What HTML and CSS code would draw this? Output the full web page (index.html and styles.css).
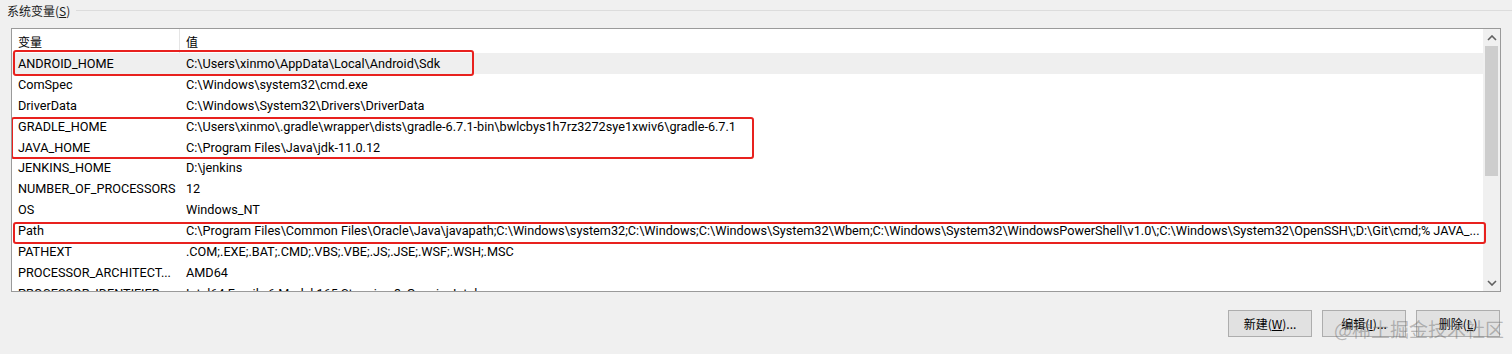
FILE: index.html
```html
<!DOCTYPE html>
<html lang="zh-CN">

<head>
    <meta charset="UTF-8">
    <meta name="viewport" content="width=device-width, initial-scale=1.0">
    <title>系统变量</title>

    <link rel="stylesheet" href="styles.css">

</head>

<body>
    <div class="group">
        <div class="group-title"><span>系统变量(<u>S</u>)</span></div>

        <div class="listview">
            <div class="table">
                <div class="row head">
                    <div class="cell name">变量</div>
                    <div class="cell value">值</div>
                </div>
                <div class="row hover">
                    <div class="cell name">ANDROID_HOME</div>
                    <div class="cell value">C:\Users\xinmo\AppData\Local\Android\Sdk</div>
                </div>
                <div class="row">
                    <div class="cell name">ComSpec</div>
                    <div class="cell value">C:\Windows\system32\cmd.exe</div>
                </div>
                <div class="row">
                    <div class="cell name">DriverData</div>
                    <div class="cell value">C:\Windows\System32\Drivers\DriverData</div>
                </div>
                <div class="row">
                    <div class="cell name">GRADLE_HOME</div>
                    <div class="cell value">C:\Users\xinmo\.gradle\wrapper\dists\gradle-6.7.1-bin\bwlcbys1h7rz3272sye1xwiv6\gradle-6.7.1</div>
                </div>
                <div class="row">
                    <div class="cell name">JAVA_HOME</div>
                    <div class="cell value">C:\Program Files\Java\jdk-11.0.12</div>
                </div>
                <div class="row">
                    <div class="cell name">JENKINS_HOME</div>
                    <div class="cell value">D:\jenkins</div>
                </div>
                <div class="row">
                    <div class="cell name">NUMBER_OF_PROCESSORS</div>
                    <div class="cell value">12</div>
                </div>
                <div class="row">
                    <div class="cell name">OS</div>
                    <div class="cell value">Windows_NT</div>
                </div>
                <div class="row">
                    <div class="cell name">Path</div>
                    <div class="cell value">C:\Program Files\Common Files\Oracle\Java\javapath;C:\Windows\system32;C:\Windows;C:\Windows\System32\Wbem;C:\Windows\System32\WindowsPowerShell\v1.0\;C:\Windows\System32\OpenSSH\;D:\Git\cmd;% JAVA_...</div>
                </div>
                <div class="row">
                    <div class="cell name">PATHEXT</div>
                    <div class="cell value">.COM;.EXE;.BAT;.CMD;.VBS;.VBE;.JS;.JSE;.WSF;.WSH;.MSC</div>
                </div>
                <div class="row">
                    <div class="cell name">PROCESSOR_ARCHITECT...</div>
                    <div class="cell value">AMD64</div>
                </div>
                <div class="row">
                    <div class="cell name">PROCESSOR_IDENTIFIER</div>
                    <div class="cell value">Intel64 Family 6 Model 165 Stepping 3, GenuineIntel</div>
                </div>
            </div>

            <div class="scrollbar">
                <div class="arrow">
                    <svg width="10" height="6" viewBox="0 0 10 6"><path d="M1 5 L5 1 L9 5" fill="none" stroke="#606060" stroke-width="1.6"/></svg>
                </div>
                <div class="track">
                    <div class="thumb"></div>
                </div>
                <div class="arrow">
                    <svg width="10" height="6" viewBox="0 0 10 6"><path d="M1 1 L5 5 L9 1" fill="none" stroke="#606060" stroke-width="1.6"/></svg>
                </div>
            </div>

            <!-- red marks drawn over the list -->
            <div class="mark mark-android"></div>
            <div class="mark mark-java"></div>
            <div class="mark mark-path"></div>
        </div>

        <div class="actions">
            <button>新建(<u>W</u>)...</button>
            <button>编辑(<u>I</u>)...</button>
            <button>删除(<u>L</u>)</button>
        </div>

        <div class="watermark">@稀土掘金技术社区</div>
    </div>
</body>

</html>
```

FILE: styles.css
```css
body {
    margin: 0;
    background-color: #f0f0f0;
    color: #000;
    font-family: Roboto, "Liberation Sans", "Noto Sans CJK SC", sans-serif;
    font-size: 12.68px;
}

.group {
    position: relative;
    height: 354px;
    overflow: hidden;
}

.group-title {
    display: flex;
    align-items: center;
    gap: 6px;
    height: 20px;
    padding-left: 7px;
    font-size: 12px;
    font-family: "Noto Sans CJK SC", sans-serif;
    color: #1a1a1a;
}

.group-title::after {
    content: "";
    flex: 1;
    height: 1px;
    background-color: #dcdcdc;
}

.listview {
    position: relative;
    display: flex;
    margin: 8px 11px 0 11px;
    height: 264px;
    box-sizing: border-box;
    border: 1px solid #9a9a9a;
    background-color: #fff;
    overflow: hidden;
}

.table {
    flex: 1;
    overflow: hidden;
}

.row {
    display: grid;
    grid-template-columns: 168px 1fr;
    height: 20.9px;
    align-items: center;
}

.row.head {
    height: 24px;
    font-family: "Noto Sans CJK SC", sans-serif;
    font-size: 12px;
}

.row.head .name {
    border-right: 1px solid #e5e5e5;
    height: 100%;
    display: flex;
    align-items: center;
    box-sizing: border-box;
}

.row.hover {
    background-color: #efefef;
}

.cell {
    padding-left: 6px;
    white-space: nowrap;
    overflow: hidden;
}

.scrollbar {
    display: flex;
    flex-direction: column;
    width: 17px;
    background-color: #f0f0f0;
}

.arrow {
    display: flex;
    justify-content: center;
    align-items: center;
    height: 17px;
}

.track {
    flex: 1;
    padding: 0 2px;
}

.thumb {
    height: 130px;
    background-color: #cdcdcd;
}

.mark {
    position: absolute;
    border: 2px solid #e8211e;
    border-radius: 3px;
    box-sizing: border-box;
}

.mark-android {
    left: 1px;
    top: 21px;
    width: 461px;
    height: 26px;
}

.mark-java {
    left: -1px;
    top: 88px;
    width: 743px;
    height: 42px;
}

.mark-path {
    left: 1px;
    top: 193px;
    width: 1473px;
    height: 22px;
}

.actions {
    display: flex;
    justify-content: flex-end;
    gap: 10px;
    margin-top: 18px;
    padding-right: 12px;
}

button {
    width: 84px;
    height: 27px;
    border: 1px solid #adadad;
    background-color: #e1e1e1;
    font-family: "Noto Sans CJK SC", sans-serif;
    font-size: 12px;
    color: #000;
    padding: 0;
}

.watermark {
    position: absolute;
    left: 1334px;
    top: 315px;
    font-family: "Noto Sans CJK SC", sans-serif;
    font-size: 19px;
    color: rgba(110, 110, 110, 0.45);
    white-space: nowrap;
}
```
